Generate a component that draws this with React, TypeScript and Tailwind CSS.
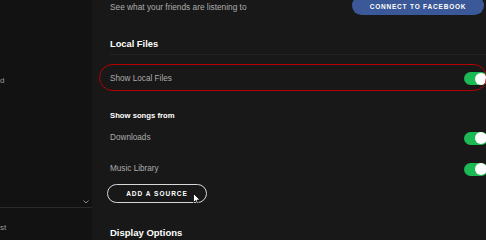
import React from 'react';

function Toggle() {
  return (
    <span className="-mr-[2px] flex h-[13px] w-[24px] shrink-0 items-center justify-end rounded-full bg-[#1db954] pr-px">
      <span className="h-[12px] w-[12px] rounded-full bg-white" />
    </span>
  );
}

function SettingRow({ label, className }: { label: string; className: string }) {
  return (
    <div className={`flex h-[16px] items-center justify-between ${className}`}>
      <span className="text-[8.2px] text-[#adadad]">{label}</span>
      <Toggle />
    </div>
  );
}

export default function App() {
  return (
    <div
      className="flex h-[240px] w-[486px] overflow-hidden bg-[#181818]"
      style={{ fontFamily: '"Liberation Sans", Arial, sans-serif' }}
    >
      <aside className="flex w-[92px] shrink-0 flex-col bg-[#121212] text-[8px] text-[#9a9a9a]">
        <div className="mt-[75px] h-[12px] leading-[12px]">d</div>
        <div className="mt-[110px] flex h-[10px] items-center justify-end pr-[3px]">
          <svg width="6" height="4" viewBox="0 0 6 4" className="text-[#8a8a8a]">
            <path d="M0.5 0.5 L3 3 L5.5 0.5" fill="none" stroke="currentColor" strokeWidth="1" />
          </svg>
        </div>
        <div className="h-px bg-[#2a2a2a]" />
        <div className="mt-[14px] h-[12px] leading-[12px]">st</div>
      </aside>

      <main className="flex min-w-0 flex-1 flex-col pl-[18px]">
        <div className="-mt-[4px] flex h-[19px] items-center justify-between">
          <span className="mt-[3px] text-[8.3px] text-[#adadad]">See what your friends are listening to</span>
          <button className="mr-[2px] flex h-[19px] w-[132px] items-center justify-center rounded-full bg-[#3b5998] pt-[3px] text-[6.5px] font-bold tracking-[0.8px] text-white">
            CONNECT TO FACEBOOK
          </button>
        </div>

        <div className="mt-[22px] h-[14px] text-[9.3px] font-bold leading-[14px] text-white">Local Files</div>
        <div className="-mr-[2px] mt-[3px] h-px bg-[#242424]" />

        <div className="relative mt-[16px]">
          <span className="pointer-events-none absolute -bottom-[4px] -left-[11px] -right-[1px] -top-[7px] rounded-[14px] border-[1.5px] border-[#b80000]" />
          <SettingRow label="Show Local Files" className="" />
        </div>

        <div className="mt-[23px] h-[12px] text-[7.7px] font-bold leading-[12px] text-white">Show songs from</div>

        <SettingRow label="Downloads" className="mt-[10px]" />
        <SettingRow label="Music Library" className="mt-[18px]" />

        <div className="relative mt-[8px] -ml-[3px]">
          <button className="flex h-[19px] w-[100px] items-center justify-center rounded-full border border-[#d8d8d8] text-[6.5px] font-bold tracking-[1px] text-white">
            ADD A SOURCE
          </button>
          <svg
            width="8"
            height="12"
            viewBox="0 0 8 12"
            className="absolute left-[86px] top-[9px]"
          >
            <path d="M0.5 0.5 L0.5 9.5 L2.6 7.6 L4 10.8 L5.4 10.2 L4 7.1 L7 7.1 Z" fill="#ffffff" stroke="#000000" strokeWidth="0.8" />
          </svg>
        </div>

        <div className="mt-[23px] h-[14px] text-[9.5px] font-bold leading-[14px] text-white">Display Options</div>
      </main>
    </div>
  );
}
